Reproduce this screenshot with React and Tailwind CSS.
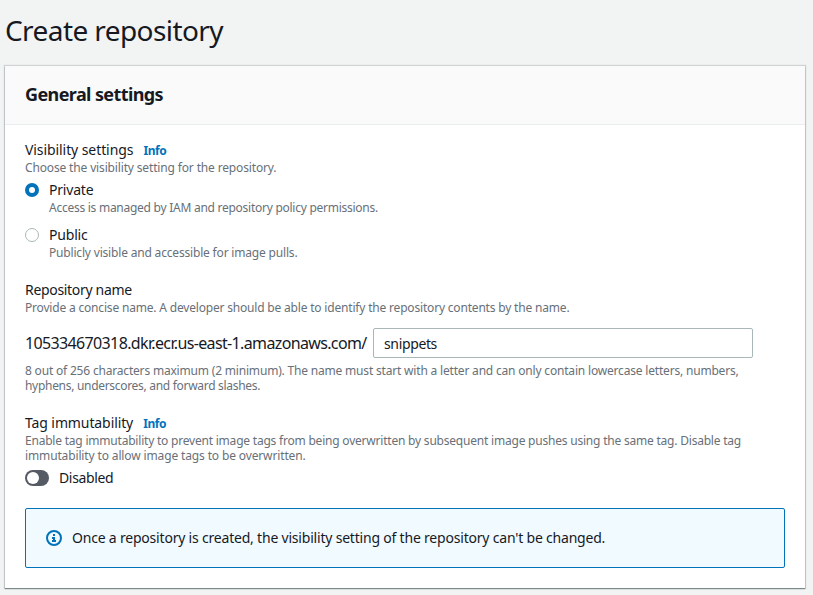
import React from "react";

function Label({ children, info, className = "" }) {
  return (
    <div className="flex h-[22px] items-center text-[14px] leading-[22px]">
      <span className={"whitespace-nowrap " + className}>{children}</span>
      {info && (
        <a className="ml-[10px] pt-px text-[12px] font-bold tracking-[-0.4px] text-[#0073bb]">Info</a>
      )}
    </div>
  );
}

function Hint({ children, className = "" }) {
  return (
    <p className={"h-[15px] whitespace-nowrap text-[12px] leading-[15px] text-[#687078] " + className}>
      {children}
    </p>
  );
}

function Radio({ checked }) {
  return (
    <svg className="mt-1 h-[14px] w-[14px] shrink-0" viewBox="0 0 14 14">
      {checked ? (
        <>
          <circle cx="7" cy="7" r="7" fill="#0073bb" />
          <circle cx="7" cy="7" r="3" fill="#fff" />
        </>
      ) : (
        <circle cx="7" cy="7" r="6.5" fill="#fff" stroke="#aab7b8" />
      )}
    </svg>
  );
}

export default function App() {
  return (
    <main className="h-[595px] w-[813px] overflow-hidden bg-[#f2f3f3] px-[5px] pt-[12px] font-['Noto_Sans',sans-serif] text-[#16191f]">
      <h1 className="h-[54px] whitespace-nowrap text-[28px] leading-[36px] tracking-[-0.58px]">
        Create repository
      </h1>
      <section className="h-[522px] w-[800px] bg-white shadow-[0_0_1px_1px_rgba(0,28,36,0.15),0_1px_1px_0_rgba(0,28,36,0.4)]">
        <header className="flex h-[59px] items-center border-b border-[#eaeded] bg-[#fafafa] px-5 pb-[2px]">
          <h2 className="text-[18px] font-bold leading-[22px] tracking-[-0.6px]">General settings</h2>
        </header>
        <div className="px-5 pt-[14px]">
          <Label info className="tracking-[-0.08px]">Visibility settings</Label>
          <Hint className="-mt-px tracking-[-0.15px]">Choose the visibility setting for the repository.</Hint>
          <div className="mt-[4px] flex gap-[10px]">
            <Radio checked />
            <div>
              <Label className="tracking-[-0.2px]">Private</Label>
              <Hint className="-mt-px tracking-[-0.26px]">Access is managed by IAM and repository policy permissions.</Hint>
            </div>
          </div>
          <div className="mt-[9px] flex gap-[10px]">
            <Radio />
            <div>
              <Label className="tracking-[-0.2px]">Public</Label>
              <Hint className="-mt-px tracking-[-0.18px]">Publicly visible and accessible for image pulls.</Hint>
            </div>
          </div>
          <div className="mt-[19px]">
            <Label className="tracking-[-0.32px]">Repository name</Label>
            <Hint className="-mt-px tracking-[-0.185px]">
              Provide a concise name. A developer should be able to identify the repository contents by the name.
            </Hint>
            <div className="mt-[13px] flex h-[30px] items-center">
              <span className="w-[348px] shrink-0 whitespace-nowrap text-[16px] leading-[22px] tracking-[-0.64px]">
                105334670318.dkr.ecr.us-east-1.amazonaws.com/
              </span>
              <input
                className="h-[30px] w-[380px] rounded-[2px] border border-[#aab7b8] bg-white px-[10px] text-[14px] tracking-[-0.36px] outline-none"
                defaultValue="snippets"
              />
            </div>
            <div className="mt-[5px]">
              <Hint className="tracking-[-0.187px]">
                8 out of 256 characters maximum (2 minimum). The name must start with a letter and can only contain lowercase letters, numbers,
              </Hint>
              <Hint className="tracking-[-0.3px]">hyphens, underscores, and forward slashes.</Hint>
            </div>
          </div>
          <div className="mt-[19px]">
            <Label info className="tracking-[-0.1px]">Tag immutability</Label>
            <Hint className="-mt-px tracking-[-0.21px]">
              Enable tag immutability to prevent image tags from being overwritten by subsequent image pushes using the same tag. Disable tag
            </Hint>
            <Hint className="tracking-[-0.135px]">immutability to allow image tags to be overwritten.</Hint>
            <div className="mt-[4px] flex items-center gap-[10px]">
              <span className="flex h-4 w-6 items-center rounded-full bg-[#545b64] px-[2px]">
                <span className="h-3 w-3 rounded-full bg-white" />
              </span>
              <Label className="tracking-[-0.35px]">Disabled</Label>
            </div>
          </div>
          <div className="mt-[19px] flex h-[60px] items-center rounded-[2px] border border-[#0073bb] bg-[#f1faff] px-5">
            <svg className="mr-[10px] h-4 w-4 shrink-0" viewBox="0 0 16 16" fill="none" stroke="#0073bb" strokeWidth="2">
              <circle cx="8" cy="8" r="7" />
              <path d="M6 8H8V11M6 11H10M7 5H9" />
            </svg>
            <span className="whitespace-nowrap text-[14px] leading-[22px] tracking-[-0.2px]">
              Once a repository is created, the visibility setting of the repository can't be changed.
            </span>
          </div>
        </div>
      </section>
    </main>
  );
}
